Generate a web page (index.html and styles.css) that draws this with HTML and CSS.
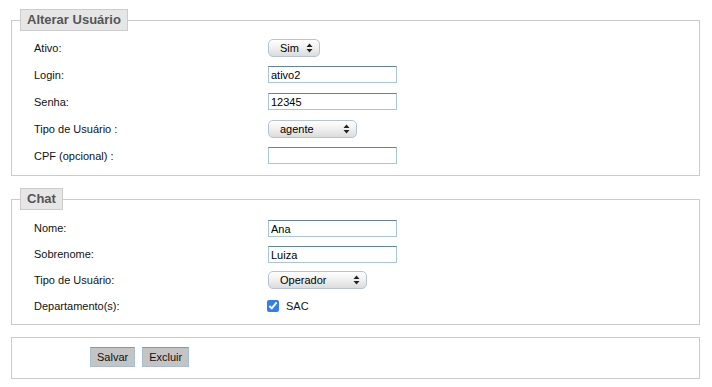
FILE: index.html
```html
<!DOCTYPE html>
<html lang="pt-BR">
<head>
<meta charset="utf-8">
<title>Alterar Usuário</title>
<link rel="stylesheet" href="styles.css">
</head>
<body>
<div class="page">
  <fieldset class="box box-user">
    <legend>Alterar Usuário</legend>
    <div class="row">
      <label class="lbl">Ativo:</label>
      <span class="sel sel-sim"><select><option>Sim</option><option>Não</option></select><svg class="arr" width="7" height="10" viewBox="0 0 7 10"><path d="M3.5 0.5 L6.5 4 L0.5 4 Z M3.5 9.5 L6.5 6 L0.5 6 Z" fill="#222"/></svg></span>
    </div>
    <div class="row">
      <label class="lbl">Login:</label>
      <input class="txt" type="text" value="ativo2">
    </div>
    <div class="row">
      <label class="lbl">Senha:</label>
      <input class="txt" type="text" value="12345">
    </div>
    <div class="row">
      <label class="lbl">Tipo de Usuário :</label>
      <span class="sel sel-agente"><select><option>agente</option></select><svg class="arr" width="7" height="10" viewBox="0 0 7 10"><path d="M3.5 0.5 L6.5 4 L0.5 4 Z M3.5 9.5 L6.5 6 L0.5 6 Z" fill="#222"/></svg></span>
    </div>
    <div class="row">
      <label class="lbl">CPF (opcional) :</label>
      <input class="txt" type="text" value="">
    </div>
  </fieldset>

  <fieldset class="box box-chat">
    <legend>Chat</legend>
    <div class="row">
      <label class="lbl">Nome:</label>
      <input class="txt" type="text" value="Ana">
    </div>
    <div class="row">
      <label class="lbl">Sobrenome:</label>
      <input class="txt" type="text" value="Luiza">
    </div>
    <div class="row">
      <label class="lbl">Tipo de Usuário:</label>
      <span class="sel sel-op"><select><option>Operador</option></select><svg class="arr" width="7" height="10" viewBox="0 0 7 10"><path d="M3.5 0.5 L6.5 4 L0.5 4 Z M3.5 9.5 L6.5 6 L0.5 6 Z" fill="#222"/></svg></span>
    </div>
    <div class="row">
      <label class="lbl">Departamento(s):</label>
      <label class="chk"><input type="checkbox" checked><span>SAC</span></label>
    </div>
  </fieldset>

  <div class="box actions">
    <button class="btn" type="button">Salvar</button>
    <button class="btn" type="button">Excluir</button>
  </div>
</div>
</body>
</html>
```
FILE: styles.css
```css
html, body {
  margin: 0;
  padding: 0;
  background: #ffffff;
}

body {
  font-family: "Liberation Sans", Arial, sans-serif;
  font-size: 11px;
  color: #111;
}

.page {
  padding: 9px 12px 0 11px;
  display: flex;
  flex-direction: column;
}

.box {
  margin: 0;
  border: 1px solid #cbcbcb;
  min-width: 0;
}

fieldset.box legend {
  margin-left: -14px;
  padding: 3px 6px;
  line-height: 14px;
  font-size: 13px;
  font-weight: bold;
  color: #555;
  background: #e6e6e6;
  border: 1px solid #cccccc;
}

.box-user {
  padding: 3px 20px 6px 22px;
}

.box-chat {
  margin-top: 12px;
  padding: 5px 20px 5px 22px;
}

.row {
  display: grid;
  grid-template-columns: 234px auto;
  align-items: center;
  justify-items: start;
  height: 27px;
}

.box-chat .row {
  height: 26px;
}

.lbl {
  font-size: 11px;
  color: #111;
}

.txt {
  box-sizing: border-box;
  width: 129px;
  height: 17px;
  margin: 0;
  padding: 1px 2px 0;
  font-family: "Liberation Sans", Arial, sans-serif;
  font-size: 11px;
  color: #000;
  background: #fff;
  border: 1px solid #a9c6d8;
  border-top-color: #5d84a6;
  border-radius: 0;
  outline: none;
}

.sel {
  position: relative;
  display: inline-block;
}

.sel select {
  -webkit-appearance: none;
  appearance: none;
  box-sizing: border-box;
  height: 18px;
  margin: 0;
  padding: 0 0 0 11px;
  font-family: "Liberation Sans", Arial, sans-serif;
  font-size: 11px;
  color: #000;
  border: 1px solid #b3c4d2;
  border-radius: 5px;
  background: linear-gradient(#ffffff 0%, #f1f1f1 45%, #dcdcdc 100%);
  box-shadow: inset 0 1px 0 #fff;
  outline: none;
}

.sel-sim select { width: 52px; }
.sel-agente select { width: 89px; }
.sel-op select { width: 99px; }

.sel .arr {
  position: absolute;
  right: 7px;
  top: 4px;
  pointer-events: none;
}

.chk {
  display: flex;
  align-items: center;
  gap: 7px;
  margin-left: -1px;
}

.chk input {
  margin: 0;
  width: 12px;
  height: 12px;
  accent-color: #2f80ed;
}

.chk span {
  font-size: 11px;
  color: #111;
}

.actions {
  margin-top: 12px;
  padding: 9px 20px 11px 78px;
  display: flex;
  gap: 7px;
}

.btn {
  box-sizing: border-box;
  height: 20px;
  margin: 0;
  padding: 0 6px;
  font-family: "Liberation Sans", Arial, sans-serif;
  font-size: 11px;
  color: #111;
  background: #c4c4c4;
  border: 1px solid #a6bfd0;
  border-top-color: #7e9bb2;
  border-radius: 0;
}
```
